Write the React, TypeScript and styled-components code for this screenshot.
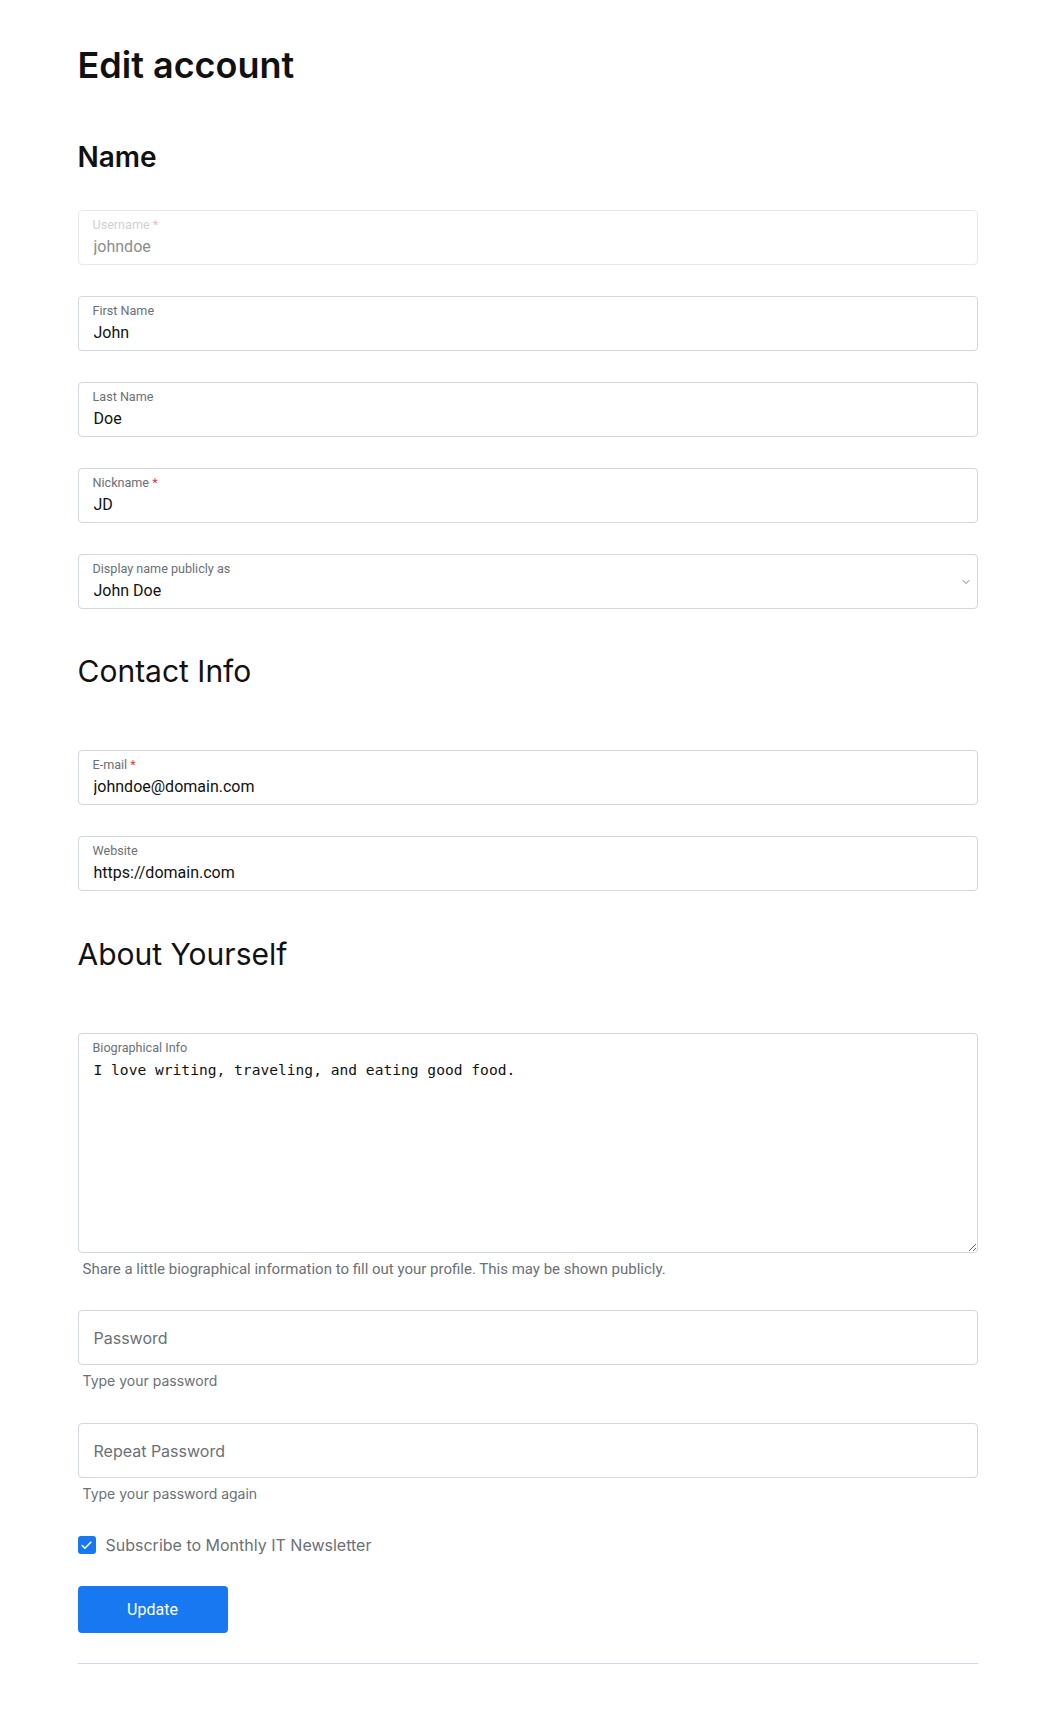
import React from 'react';
import styled, { createGlobalStyle } from 'styled-components';
import { Check, ChevronDown } from 'lucide-react';

const GlobalStyle = createGlobalStyle`
  body {
    margin: 0;
    background: #ffffff;
    font-family: Inter, "Noto Sans", sans-serif;
    color: #111111;
  }
  * {
    box-sizing: border-box;
  }
`;

const nameFields = [
  { id: 'username', label: 'Username', value: 'johndoe', required: true, disabled: true },
  { id: 'first', label: 'First Name', value: 'John' },
  { id: 'last', label: 'Last Name', value: 'Doe' },
  { id: 'nickname', label: 'Nickname', value: 'JD', required: true },
];

const contactFields = [
  { id: 'email', label: 'E-mail', value: 'johndoe@domain.com', required: true },
  { id: 'website', label: 'Website', value: 'https://domain.com' },
];

type FieldProps = {
  id: string;
  label: string;
  value: string;
  required?: boolean;
  disabled?: boolean;
};

const TextField = ({ id, label, value, required, disabled }: FieldProps) => (
  <Field>
    <FloatLabel htmlFor={id} $disabled={disabled}>
      {label}
      {required && <Star $disabled={disabled}> *</Star>}
    </FloatLabel>
    <Input id={id} defaultValue={value} disabled={disabled} />
  </Field>
);

const App = () => {
  return (
    <>
      <GlobalStyle />
      <Page>
        <Title>Edit account</Title>

        <SectionTitle $size={28} $weight={600} $top={53} $bottom={36}>
          Name
        </SectionTitle>
        <FieldList>
          {nameFields.map((f) => (
            <TextField key={f.id} {...f} />
          ))}
          <Field>
            <FloatLabel htmlFor="display">Display name publicly as</FloatLabel>
            <Select id="display" defaultValue="John Doe">
              <option>johndoe</option>
              <option>John</option>
              <option>John Doe</option>
              <option>JD</option>
            </Select>
            <Chevron>
              <ChevronDown size={12} strokeWidth={1.5} />
            </Chevron>
          </Field>
        </FieldList>

        <SectionTitle $size={30} $weight={400} $top={44} $bottom={61}>
          Contact Info
        </SectionTitle>
        <FieldList>
          {contactFields.map((f) => (
            <TextField key={f.id} {...f} />
          ))}
        </FieldList>

        <SectionTitle $size={30} $weight={400} $top={45} $bottom={61}>
          About Yourself
        </SectionTitle>
        <Field>
          <FloatLabel htmlFor="bio">Biographical Info</FloatLabel>
          <Bio id="bio" defaultValue="I love writing, traveling, and eating good food." />
        </Field>
        <BioHelp>Share a little biographical information to fill out your profile. This may be shown publicly.</BioHelp>

        <PlainInput type="password" placeholder="Password" $top={31} />
        <Hint>Type your password</Hint>

        <PlainInput type="password" placeholder="Repeat Password" $top={32} />
        <Hint>Type your password again</Hint>

        <CheckRow>
          <CheckBox>
            <HiddenCheck type="checkbox" defaultChecked />
            <CheckMark>
              <Check size={13} strokeWidth={3} />
            </CheckMark>
          </CheckBox>
          <CheckText>Subscribe to Monthly IT Newsletter</CheckText>
        </CheckRow>

        <UpdateButton type="button">Update</UpdateButton>
        <Divider />
      </Page>
    </>
  );
};

const Page = styled.form`
  max-width: 900px;
  margin: 0 auto;
  padding: 43px 0 57px;
  display: flex;
  flex-direction: column;
`;

const Title = styled.h1`
  margin: 0;
  font-size: 36px;
  line-height: 44px;
  font-weight: 600;
  color: #111111;
`;

const SectionTitle = styled.h2<{ $size: number; $weight: number; $top: number; $bottom: number }>`
  margin: ${(p) => p.$top}px 0 ${(p) => p.$bottom}px;
  font-size: ${(p) => p.$size}px;
  line-height: ${(p) => p.$size + 6}px;
  font-weight: ${(p) => p.$weight};
  color: #111111;
`;

const FieldList = styled.div`
  display: flex;
  flex-direction: column;
  gap: 31px;
`;

const Field = styled.div`
  position: relative;
  width: 100%;
`;

const FloatLabel = styled.label<{ $disabled?: boolean }>`
  position: absolute;
  top: 8px;
  left: 15px;
  font-family: Roboto, "Liberation Sans", sans-serif;
  font-size: 12.6px;
  line-height: 14px;
  color: ${(p) => (p.$disabled ? '#cfd1d6' : '#6b7078')};
  pointer-events: none;
`;

const Star = styled.span<{ $disabled?: boolean }>`
  color: ${(p) => (p.$disabled ? '#f4b9b9' : '#e53935')};
`;

const Input = styled.input`
  display: block;
  width: 100%;
  height: 55px;
  padding: 26px 15px 8px;
  border: 1px solid #d2d6e0;
  border-radius: 4px;
  background: #ffffff;
  font-family: Roboto, "Liberation Sans", sans-serif;
  font-size: 16px;
  line-height: 19px;
  color: #111111;
  outline: none;

  &:disabled {
    border-color: #e6e8ed;
    color: #8c8c8c;
    background: #ffffff;
  }
`;

const Select = styled.select`
  display: block;
  width: 100%;
  height: 55px;
  padding: 26px 15px 8px;
  border: 1px solid #d2d6e0;
  border-radius: 4px;
  background: #ffffff;
  font-family: Roboto, "Liberation Sans", sans-serif;
  font-size: 16px;
  line-height: 19px;
  color: #111111;
  appearance: none;
  outline: none;
`;

const Chevron = styled.span`
  position: absolute;
  right: 6px;
  top: 22px;
  display: flex;
  color: #4a4d52;
  pointer-events: none;
`;

const Bio = styled.textarea`
  display: block;
  width: 100%;
  height: 220px;
  padding: 26px 15px 8px;
  border: 1px solid #d2d6e0;
  border-radius: 4px;
  font-family: "DejaVu Sans Mono", "Liberation Mono", monospace;
  font-size: 14.6px;
  line-height: 20px;
  color: #111111;
  resize: vertical;
  outline: none;
`;

const BioHelp = styled.p`
  margin: 6px 0 0;
  padding-left: 5px;
  font-family: Roboto, "Liberation Sans", sans-serif;
  font-size: 15px;
  line-height: 20px;
  color: #6b7078;
`;

const PlainInput = styled.input<{ $top: number }>`
  display: block;
  width: 100%;
  height: 55px;
  margin-top: ${(p) => p.$top}px;
  padding: 0 15px;
  border: 1px solid #d2d6e0;
  border-radius: 4px;
  font-family: Inter, "Noto Sans", sans-serif;
  font-size: 16px;
  color: #111111;
  outline: none;

  &::placeholder {
    color: #6b7078;
  }
`;

const Hint = styled.p`
  margin: 6px 0 0;
  padding-left: 5px;
  font-family: Inter, "Noto Sans", sans-serif;
  font-size: 14px;
  line-height: 20px;
  color: #6b7078;
`;

const CheckRow = styled.label`
  margin-top: 31px;
  display: flex;
  align-items: center;
  gap: 10px;
  height: 20px;
  cursor: pointer;
`;

const CheckBox = styled.span`
  position: relative;
  width: 18px;
  height: 18px;
  flex: none;
`;

const HiddenCheck = styled.input`
  appearance: none;
  margin: 0;
  width: 18px;
  height: 18px;
  border-radius: 3px;
  background: #1778f2;
  display: block;
`;

const CheckMark = styled.span`
  position: absolute;
  inset: 0;
  display: flex;
  align-items: center;
  justify-content: center;
  color: #ffffff;
  pointer-events: none;
`;

const CheckText = styled.span`
  font-family: Inter, "Noto Sans", sans-serif;
  font-size: 16px;
  color: #6b7078;
`;

const UpdateButton = styled.button`
  margin-top: 31px;
  width: 150px;
  height: 47px;
  border: none;
  border-radius: 4px;
  background: #1778f2;
  color: #ffffff;
  font-family: Roboto, "Liberation Sans", sans-serif;
  font-size: 16px;
  cursor: pointer;
`;

const Divider = styled.hr`
  margin: 30px 0 0;
  border: none;
  border-top: 1px solid #d2d6e2;
`;

export default App;
